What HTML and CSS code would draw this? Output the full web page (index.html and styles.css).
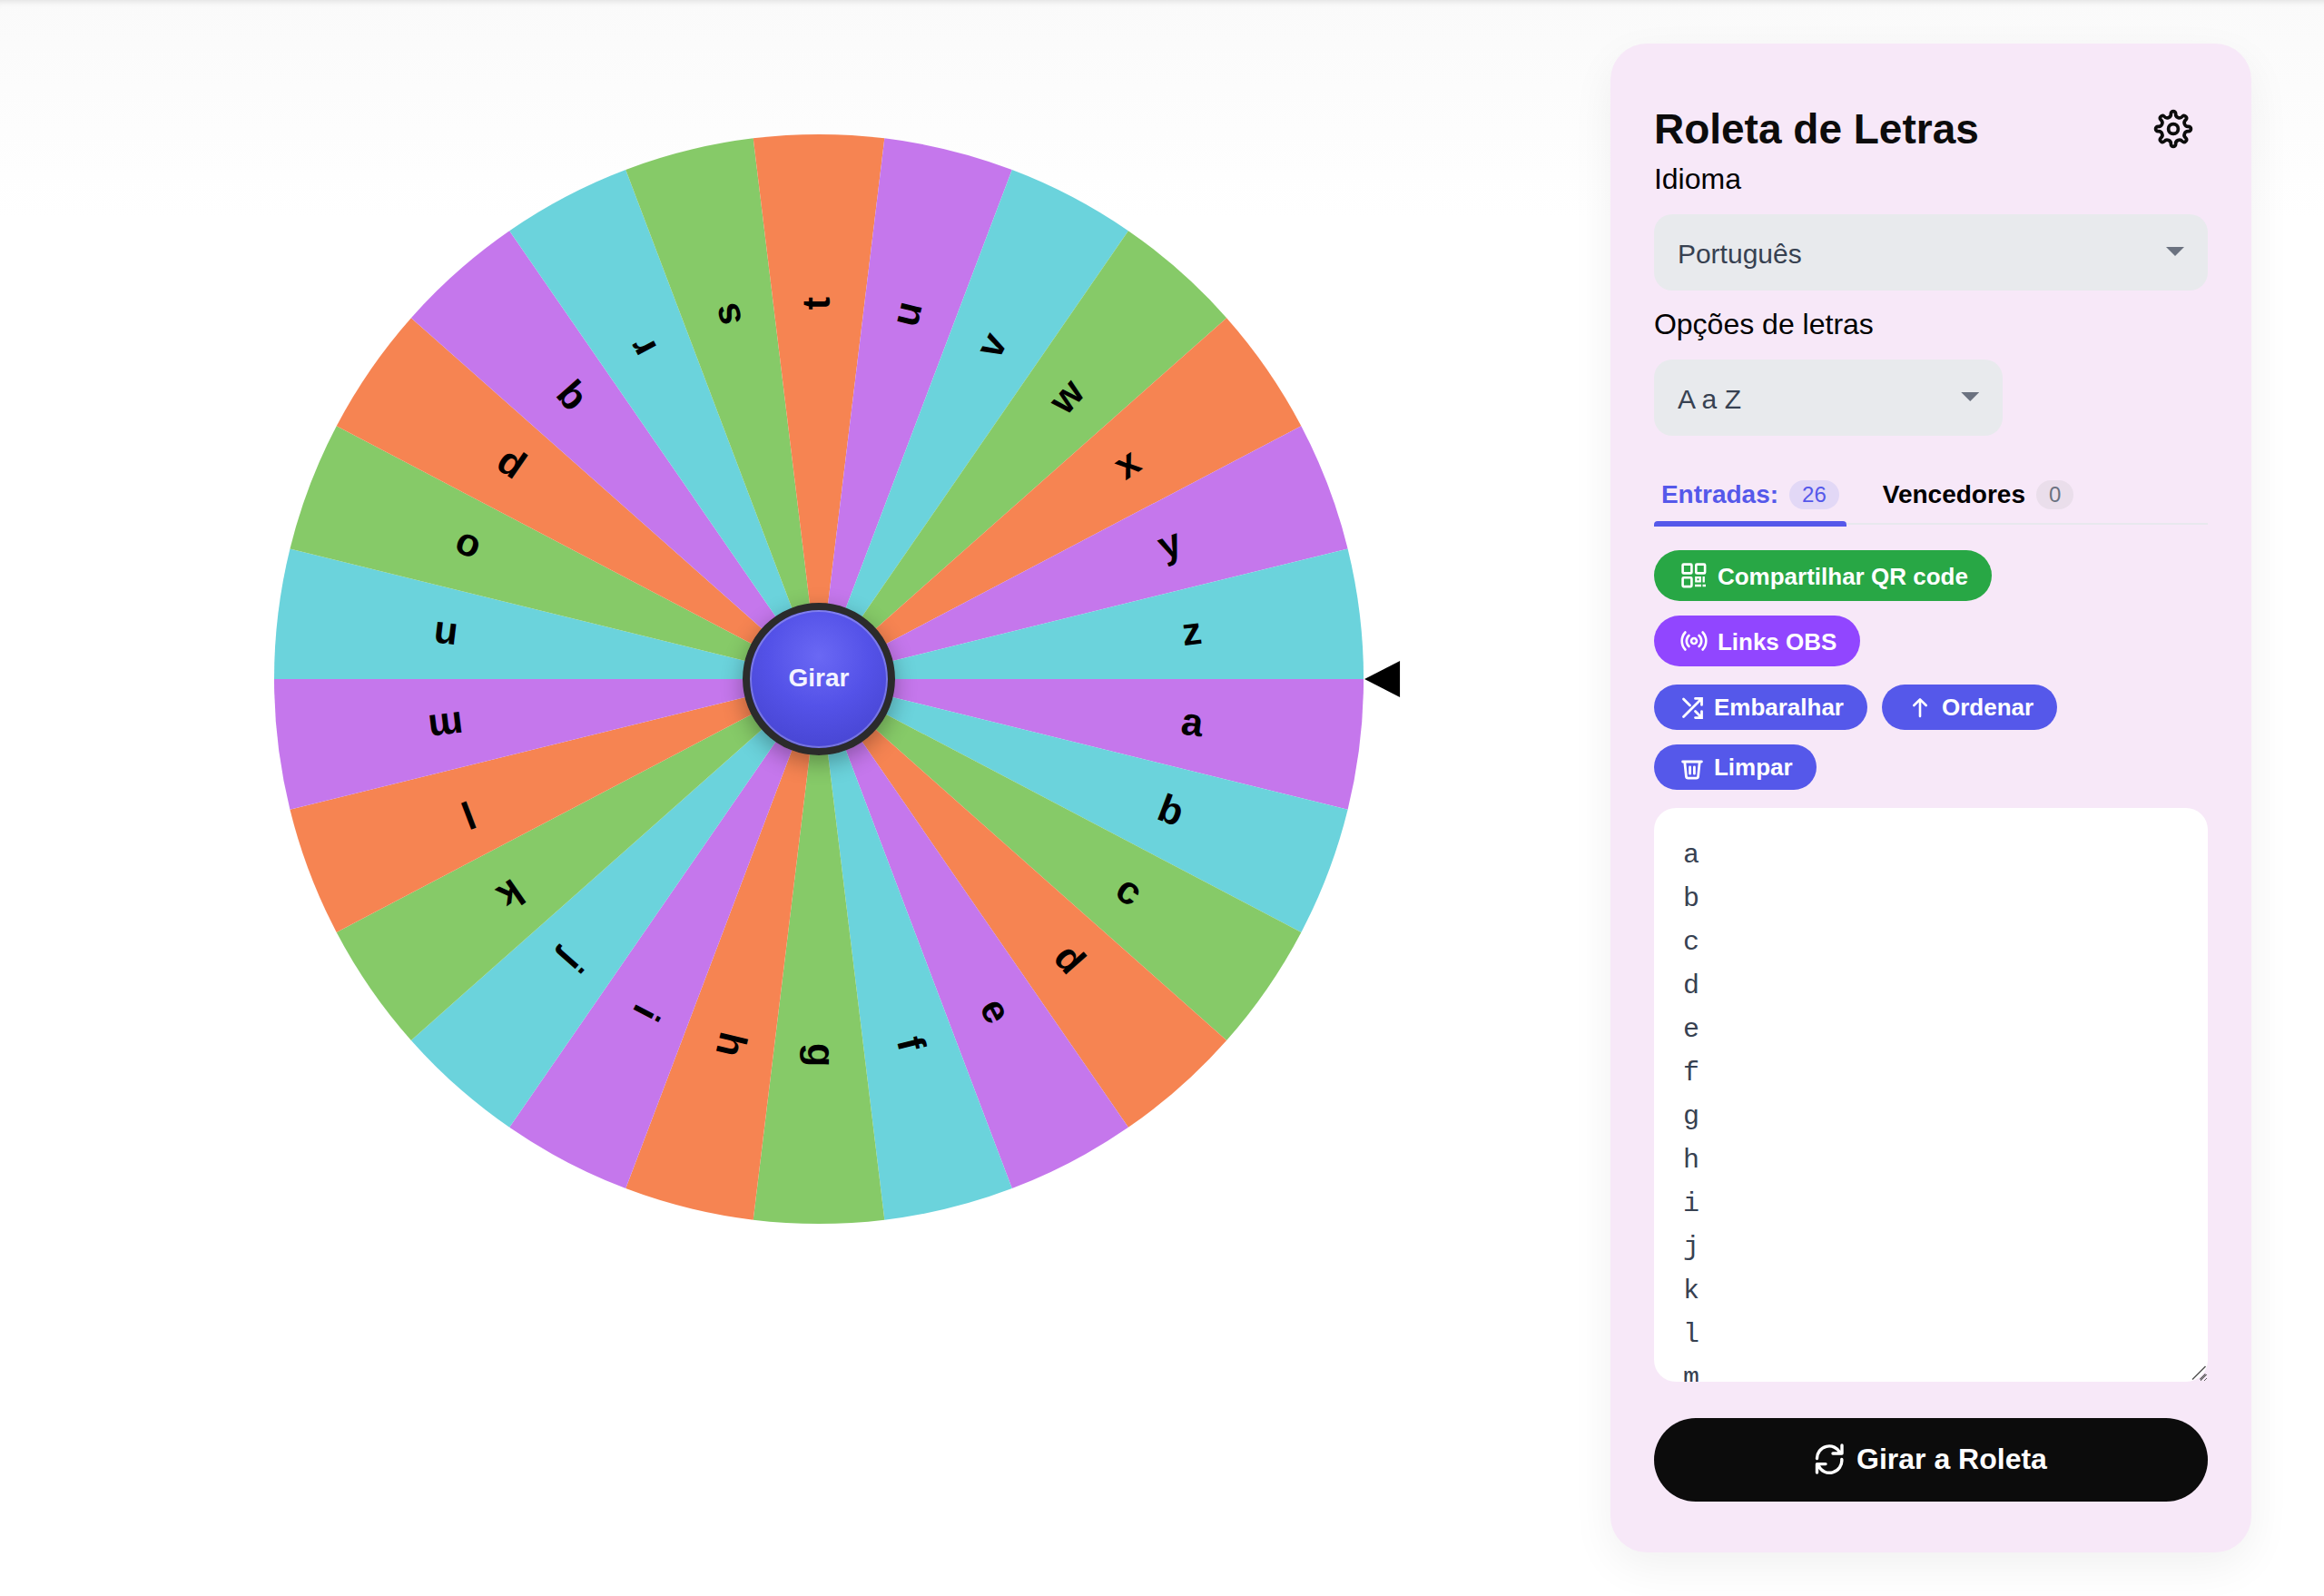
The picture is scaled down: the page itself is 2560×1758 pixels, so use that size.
FILE: index.html
```html
<!DOCTYPE html>
<html lang="pt">
<head>
  <meta charset="UTF-8" />
  <meta name="viewport" content="width=device-width, initial-scale=1.0"/>
  <title>Roleta de Letras</title>
  <link rel="stylesheet" href="styles.css">
</head>
<body>
  <main class="page">
    <section class="wheel-area">
      <div class="wheel">
        <svg id="wheel" class="wheel-svg" viewBox="-600 -600 1200 1200">
          <g id="slices"></g>
          <polygon points="601,0 640,-20 640,20"/>
        </svg>
        <button type="button" class="hub">Girar</button>
      </div>
    </section>

    <aside class="panel">
      <div class="panel-header">
        <h1>Roleta de Letras</h1>
        <button type="button" class="settings" aria-label="Configurações">
          <svg width="44" height="44" viewBox="-22 -22 44 44" fill="none" stroke="currentColor" stroke-width="3.7">
            <path d="M-2.66-16.79A2.66 2.66 0 0 1 2.66-16.79A4.1 4.1 0 0 0 9.99-13.75A2.66 2.66 0 0 1 13.75-9.99A4.1 4.1 0 0 0 16.79-2.66A2.66 2.66 0 0 1 16.79 2.66A4.1 4.1 0 0 0 13.75 9.99A2.66 2.66 0 0 1 9.99 13.75A4.1 4.1 0 0 0 2.66 16.79A2.66 2.66 0 0 1-2.66 16.79A4.1 4.1 0 0 0-9.99 13.75A2.66 2.66 0 0 1-13.75 9.99A4.1 4.1 0 0 0-16.79 2.66A2.66 2.66 0 0 1-16.79-2.66A4.1 4.1 0 0 0-13.75-9.99A2.66 2.66 0 0 1-9.99-13.75A4.1 4.1 0 0 0-2.66-16.79Z"/>
            <circle r="5.4"/>
          </svg>
        </button>
      </div>

      <div class="field">
        <label for="language">Idioma</label>
        <div class="select">
          <select id="language">
            <option>Português</option>
            <option>English</option>
            <option>Español</option>
          </select>
        </div>
      </div>
      <div class="field">
        <label for="letters">Opções de letras</label>
        <div class="select short">
          <select id="letters">
            <option>A a Z</option>
            <option>Vogais</option>
            <option>Consoantes</option>
          </select>
        </div>
      </div>

      <div class="tabs" role="tablist">
        <button type="button" class="tab active" role="tab" aria-selected="true">Entradas: <span class="count">26</span></button>
        <button type="button" class="tab" role="tab" aria-selected="false">Vencedores <span class="count">0</span></button>
      </div>

      <div class="share">
        <button type="button" class="pill big green">
          <svg width="32" height="32" viewBox="0 0 32 32" fill="none" stroke="currentColor" stroke-width="2.6">
            <rect x="3.6" y="3.6" width="9.8" height="9.8" rx="1"/>
            <rect x="18.3" y="3.6" width="9.8" height="9.8" rx="1"/>
            <rect x="3.6" y="18.3" width="9.8" height="9.8" rx="1"/>
            <path d="M18.3 18.2h4.4v4.2h-4.4zM26.7 17v6.4M17 27h7M25.5 27H29" stroke-width="2.3"/>
          </svg>
          <span>Compartilhar QR code</span>
        </button>
        <button type="button" class="pill big purple">
          <svg width="32" height="32" viewBox="-16 -16 32 32" fill="none" stroke="currentColor" stroke-width="2.6" stroke-linecap="round">
            <circle r="3"/>
            <path d="M-5.5-6A8 8 0 0 0-5.5 6M5.5-6A8 8 0 0 1 5.5 6M-9.6-9.5A14 14 0 0 0-9.6 9.5M9.6-9.5A14 14 0 0 1 9.6 9.5"/>
          </svg>
          <span>Links OBS</span>
        </button>
      </div>

      <div class="actions">
        <button type="button" class="pill">
          <svg width="28" height="28" viewBox="0 0 28 28" fill="none" stroke="currentColor" stroke-width="2.8" stroke-linecap="round">
            <path d="M4.5 24.5 24 5M4.5 5l7 7M17.5 18.5l7 7M17.5 4.4h7v7M17.5 25.6h7v-7"/>
          </svg>
          <span>Embaralhar</span>
        </button>
        <button type="button" class="pill">
          <svg width="28" height="28" viewBox="0 0 28 28" fill="none" stroke="currentColor" stroke-width="2.6" stroke-linecap="round" stroke-linejoin="round">
            <path d="M14 24V5.5M7.3 12 14 5.3 20.7 12"/>
          </svg>
          <span>Ordenar</span>
        </button>
        <button type="button" class="pill">
          <svg width="28" height="28" viewBox="0 0 28 28" fill="none" stroke="currentColor" stroke-width="2.8" stroke-linecap="round" stroke-linejoin="round">
            <path d="M3.6 8h20.8M5.8 8.5l1.6 15.6q.2 2 2 2h9.2q1.8 0 2-2l1.6-15.6M11.6 13.8v7.4M16.4 13.8v7.4"/>
          </svg>
          <span>Limpar</span>
        </button>
      </div>

      <div class="entries-box">
        <textarea id="entries" class="entries" aria-label="Entradas" spellcheck="false">a
b
c
d
e
f
g
h
i
j
k
l
m
n
o
p
q
r
s
t
u
v
w
x
y
z</textarea>
        <svg class="grip" width="20" height="20" viewBox="0 0 20 20" stroke="#555" stroke-width="1.5">
          <path d="M3 17.5 17.5 3M11.5 17.5l6-6"/>
        </svg>
      </div>

      <button type="button" class="spin">
        <svg width="32" height="34" viewBox="0 0 32 34" fill="none" stroke="currentColor" stroke-width="3.4" stroke-linecap="round" stroke-linejoin="round">
          <path d="M2.5 16.5A13.5 13.5 0 0 1 28 10.2M30 2v9H20M29.8 17.5A13.5 13.5 0 0 1 4 24.2M2.5 32v-9.4h9.5"/>
        </svg>
        <span>Girar a Roleta</span>
      </button>
    </aside>
  </main>

  <script>
    const colors = ["#c577ec", "#6bd3dc", "#86ca68", "#f68452"];
    const radius = 600;
    const textRadius = 414;
    const svgNS = "http://www.w3.org/2000/svg";

    function drawWheel() {
      const entries = document.getElementById("entries").value.split("\n").filter(e => e.trim());
      const group = document.getElementById("slices");
      const step = 360 / entries.length;
      const rad = step * Math.PI / 180;
      group.innerHTML = "";

      entries.forEach((entry, i) => {
        const start = i * rad;
        const end = start + rad;
        const slice = document.createElementNS(svgNS, "path");
        slice.setAttribute("d", `M0 0L${radius * Math.cos(start)} ${radius * Math.sin(start)}A${radius} ${radius} 0 0 1 ${radius * Math.cos(end)} ${radius * Math.sin(end)}Z`);
        slice.setAttribute("fill", colors[i % colors.length]);
        group.appendChild(slice);
      });

      entries.forEach((entry, i) => {
        const text = document.createElementNS(svgNS, "text");
        text.setAttribute("x", textRadius);
        text.setAttribute("y", 12);
        text.setAttribute("transform", `rotate(${(i + 0.5) * step})`);
        text.textContent = entry;
        group.appendChild(text);
      });
    }

    document.getElementById("entries").addEventListener("input", drawWheel);
    drawWheel();
  </script>
</body>
</html>
```
FILE: styles.css
```css
* {
  box-sizing: border-box;
}
body {
  margin: 0;
  font-family: "Liberation Sans", Arial, sans-serif;
  color: #000;
  background: #fff linear-gradient(#fafafa, #fff 240px) no-repeat;
  box-shadow: inset 0 8px 8px -8px rgba(0,0,0,0.15);
}
button {
  border: none;
  padding: 0;
  font-family: inherit;
  cursor: pointer;
}
svg {
  flex-shrink: 0;
}
.page {
  display: grid;
  grid-template-columns: minmax(0, 1fr) 29.42%;
  align-items: start;
  gap: 50px;
  padding: 48px 80px;
}

/* wheel */
.wheel-area {
  display: flex;
  justify-content: center;
  padding-top: 100px;
}
.wheel {
  position: relative;
  width: 73%;
}
.wheel-svg {
  display: block;
  width: 100%;
  overflow: visible;
}
.wheel-svg text {
  font-size: 43px;
  font-weight: bold;
  text-anchor: middle;
}
.hub {
  position: absolute;
  top: 43%;
  left: 43%;
  width: 14%;
  height: 14%;
  padding-bottom: 2px;
  border: 8px solid #2b2b2b;
  border-radius: 50%;
  background: radial-gradient(circle at 50% 35%, #6a68f4, #5452e8 40%, #3f3dc4);
  background-origin: border-box;
  box-shadow: inset 0 0 0 2px rgba(255,255,255,0.25), 0 8px 24px rgba(0,0,0,0.3);
  color: #f3f3ff;
  font-size: 28px;
  font-weight: bold;
}

/* panel */
.panel {
  background: #f7e8f8;
  border-radius: 40px;
  padding: 56px 48px;
  box-shadow: 0 16px 48px rgba(0,0,0,0.06);
}
.panel-header {
  display: flex;
  align-items: center;
  justify-content: space-between;
}
h1 {
  margin: 0;
  font-size: 46px;
  line-height: 56px;
  color: #0c0c0c;
}
.settings {
  padding: 16px;
  height: 76px;
  background: none;
  color: #0c0c0c;
}
.field {
  margin-bottom: 20px;
}
.field label {
  display: block;
  font-size: 32px;
  line-height: 34px;
  margin-bottom: 22px;
}
.select {
  position: relative;
}
.select.short {
  width: 63%;
}
.select::after {
  content: "";
  position: absolute;
  top: 36px;
  right: 26px;
  width: 20px;
  height: 10px;
  background: #6b7280;
  clip-path: polygon(0 0, 100% 0, 50% 100%);
  pointer-events: none;
}
.select select {
  appearance: none;
  display: block;
  width: 100%;
  height: 84px;
  padding: 2px 60px 0 26px;
  border: none;
  border-radius: 20px;
  background: #e8eaed;
  color: #374151;
  font-family: inherit;
  font-size: 30px;
}
.tabs {
  display: flex;
  gap: 32px;
  margin: 48px 0 28px;
  box-shadow: inset 0 -2px #e8e8ed;
}
.tab {
  display: flex;
  align-items: center;
  gap: 12px;
  padding: 0 8px 12px;
  background: none;
  border-bottom: 6px solid transparent;
  margin-bottom: -2px;
  color: #000;
  font-size: 28px;
  font-weight: bold;
  line-height: 34px;
}
.tab.active {
  position: relative;
  color: #5558ea;
}
.tab.active::after {
  content: "";
  position: absolute;
  left: 0;
  right: 0;
  bottom: -6px;
  height: 6px;
  border-radius: 4px 4px 0 0;
  background: #5558ea;
}
.count {
  padding: 0 14px;
  border-radius: 16px;
  background: #eadeeb;
  color: #6b7280;
  font-size: 24px;
  font-weight: normal;
  line-height: 32px;
}
.tab.active .count {
  background: #e2d8f6;
  color: #5558ea;
}
.share {
  display: flex;
  flex-direction: column;
  align-items: flex-start;
  gap: 16px;
}
.actions {
  display: flex;
  flex-wrap: wrap;
  gap: 16px;
  max-width: 500px;
  margin: 20px 0;
}
.pill {
  display: flex;
  align-items: center;
  gap: 10px;
  height: 50px;
  padding: 0 26px 0 28px;
  border-radius: 28px;
  background: #5558ea;
  color: #fff;
  font-size: 26px;
  font-weight: bold;
}
.pill.big {
  height: 56px;
}
.pill.big span {
  padding-top: 2px;
}
.pill.green {
  background: #28a745;
}
.pill.purple {
  background: #9146ff;
}
.entries-box {
  position: relative;
}
.entries {
  display: block;
  width: 100%;
  height: 632px;
  padding: 28px 32px;
  border: none;
  border-radius: 24px;
  background: #fff;
  color: #374151;
  font-family: "Liberation Mono", "Courier New", monospace;
  font-size: 30px;
  line-height: 48px;
  resize: vertical;
  scrollbar-width: none;
}
.grip {
  position: absolute;
  right: 0;
  bottom: 0;
  pointer-events: none;
}
.spin {
  display: flex;
  align-items: center;
  justify-content: center;
  gap: 14px;
  width: 100%;
  height: 92px;
  margin-top: 40px;
  padding-bottom: 2px;
  border-radius: 46px;
  background: #0c0c0c;
  color: #fff;
  font-size: 32px;
  font-weight: bold;
}
```
